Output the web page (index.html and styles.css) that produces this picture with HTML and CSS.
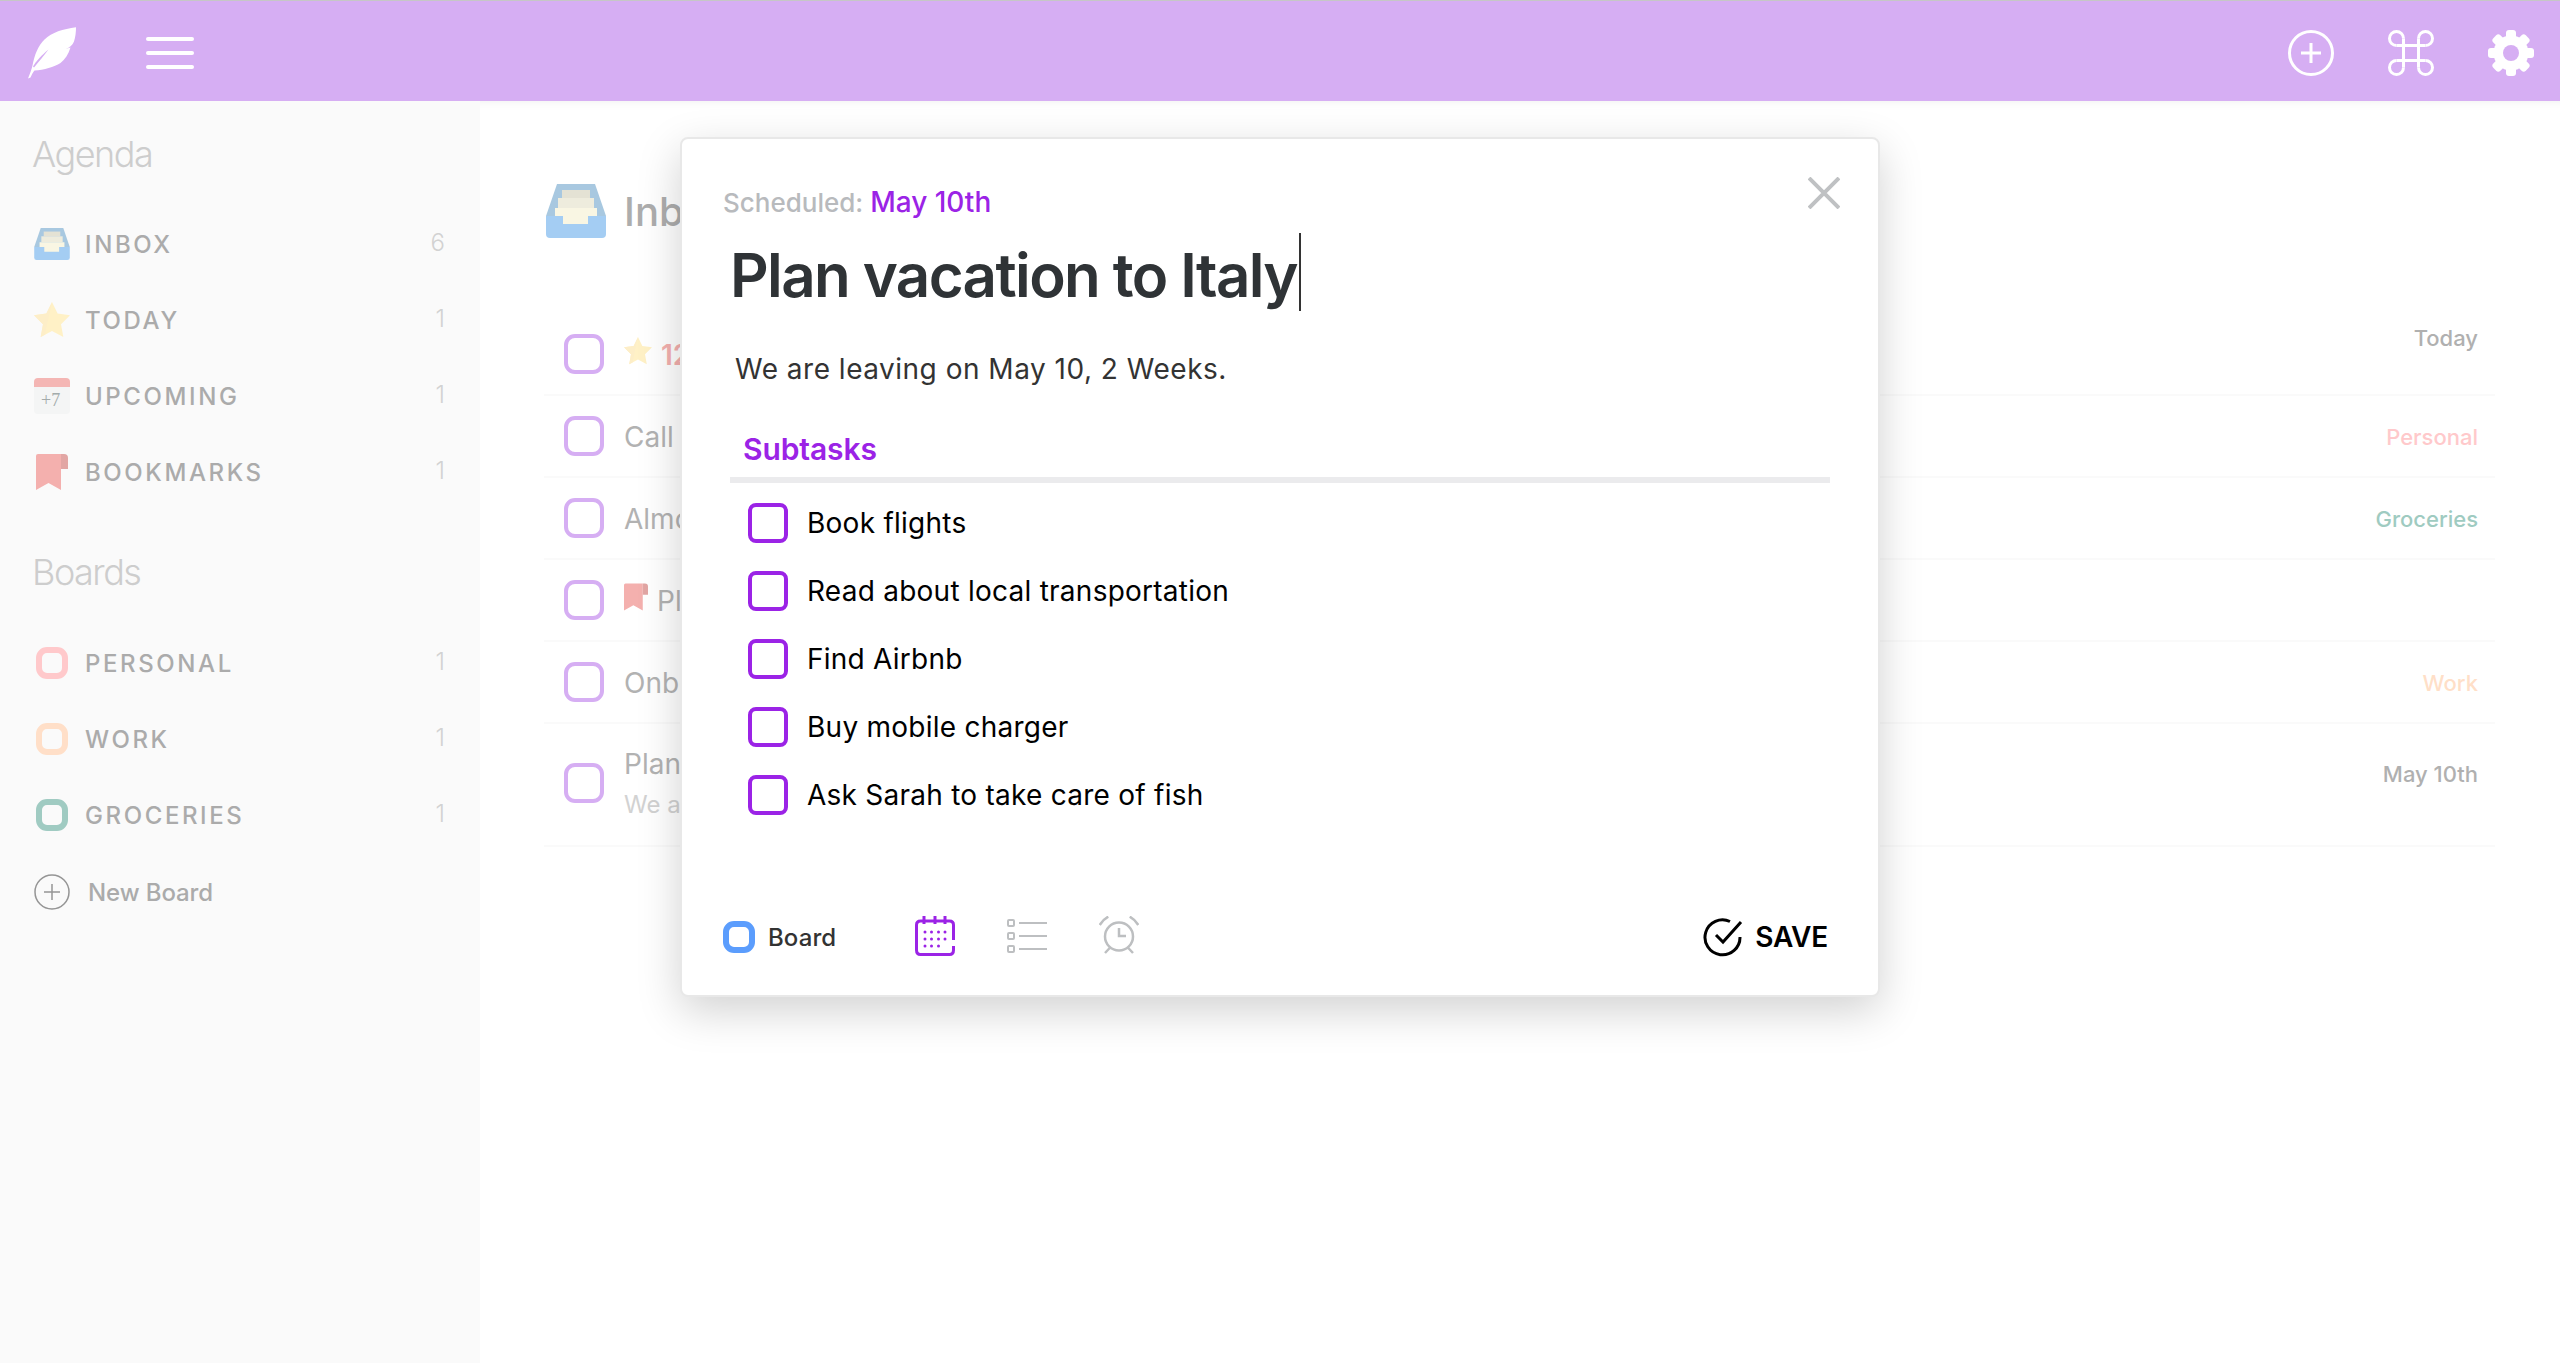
FILE: index.html
```html
<!DOCTYPE html>
<html lang="en">
<head>
    <meta charset="UTF-8">
    <title>Plan vacation to Italy</title>
    <link rel="stylesheet" href="styles.css">
</head>
<body>
    <svg class="defs" width="0" height="0">
        <symbol id="i-inbox" viewBox="0 0 60 54">
            <path d="M11 0H49L60 32H0Z" fill="#a8c8e0"/>
            <rect x="16" y="6" width="28" height="8" fill="#e4e2d4"/>
            <rect x="12" y="14" width="36" height="10" fill="#eeecdd"/>
            <path d="M0 32H60V50Q60 54 56 54H4Q0 54 0 50Z" fill="#a4cdf3"/>
            <path d="M9 24H51V32H42V40H17V32H9Z" fill="#f9f6e3"/>
        </symbol>
        <symbol id="i-star" viewBox="0 0 36 36">
            <path d="M18 0L23.6 11.6 36 13.2 27 22.3 29.3 35 18 29 6.7 35 9 22.3 0 13.2 12.4 11.6Z" fill="#fff1c6"/>
            <path d="M18 0L12.4 11.6 0 13.2 9 22.3 6.7 35 11 32.7 14 18Z" fill="#fdeec8"/>
        </symbol>
        <symbol id="i-upcoming" viewBox="0 0 36 36">
            <path d="M0 9V4Q0 0 4 0H32Q36 0 36 4V9Z" fill="#f4b6b4"/>
            <path d="M0 9H36V32Q36 36 32 36H4Q0 36 0 32Z" fill="#f4f5f5"/>
            <text x="7" y="28" class="cal-text">+7</text>
        </symbol>
        <symbol id="i-bookmark" viewBox="0 0 32 36">
            <path d="M0 2Q0 0 2 0H25V36L12.5 29 0 36Z" fill="#f4b0ae"/>
            <path d="M25 0H28Q32 0 32 4V15H25Z" fill="#e2a6a4"/>
        </symbol>
    </svg>

    <header class="topbar">
        <div class="topbar-left">
            <svg class="feather" width="50" height="54" viewBox="27 26 50 54">
                <path d="M76 27.3C63 29 52 32.500 44.500 39.500 38 46 34.500 55 32.500 65.500 31.500 70 29.500 74.500 28 78.500L30.500 77.500C31.500 75 33 72.500 34.500 70.500 44 70 54 67 60.500 63 65 59.500 68.500 54 70.500 47.500L65.500 49C70 47.500 72.500 45 74 41.500 75.500 37 76 32 76 27.3Z" fill="#fff"/>
                <path d="M33 66.500C36 61 42 55 48.500 49.500 43.500 56 39 61.500 34 67.500Z" fill="#d6aef3"/>
            </svg>
            <div class="burger"><span></span><span></span><span></span></div>
        </div>
        <div class="topbar-right">
            <svg width="46" height="46" viewBox="0 0 46 46" class="top-icon">
                <circle cx="23" cy="23" r="21.500"/>
                <path d="M23 13V33M13 23H33"/>
            </svg>
            <svg width="46" height="46" viewBox="0 0 46 46" class="top-icon">
                <path d="M15.500 8.500V37.500M30.500 8.500V37.500M8.500 15.500H37.500M8.500 30.500H37.500"/>
                <path d="M15.500 8.500A7 7 0 1 0 8.500 15.500M30.500 8.500A7 7 0 1 1 37.500 15.500M15.500 37.500A7 7 0 1 1 8.500 30.500M30.500 37.500A7 7 0 1 0 37.500 30.500"/>
            </svg>
            <svg width="46" height="46" viewBox="0 0 46 46" class="gear">
                <circle cx="23" cy="23" r="17.500" fill="#fff"/>
                <rect x="18" y="0" width="10" height="46" rx="3" fill="#fff"/>
                <rect x="18" y="0" width="10" height="46" rx="3" fill="#fff" transform="rotate(45 23 23)"/>
                <rect x="18" y="0" width="10" height="46" rx="3" fill="#fff" transform="rotate(90 23 23)"/>
                <rect x="18" y="0" width="10" height="46" rx="3" fill="#fff" transform="rotate(135 23 23)"/>
                <circle cx="23" cy="23" r="8" fill="#d6aef3"/>
            </svg>
        </div>
    </header>

    <div class="layout">
        <aside class="sidebar">
            <h2 class="side-title">Agenda</h2>
            <ul class="side-list">
                <li class="side-item">
                    <svg class="side-icon" width="36" height="32"><use href="#i-inbox"/></svg>
                    <span class="side-label">INBOX</span><span class="side-count">6</span>
                </li>
                <li class="side-item">
                    <svg class="side-icon" width="36" height="36"><use href="#i-star"/></svg>
                    <span class="side-label">TODAY</span><span class="side-count">1</span>
                </li>
                <li class="side-item">
                    <svg class="side-icon" width="36" height="36"><use href="#i-upcoming"/></svg>
                    <span class="side-label">UPCOMING</span><span class="side-count">1</span>
                </li>
                <li class="side-item">
                    <svg class="side-icon" width="32" height="36"><use href="#i-bookmark"/></svg>
                    <span class="side-label">BOOKMARKS</span><span class="side-count">1</span>
                </li>
            </ul>

            <h2 class="side-title boards-title">Boards</h2>
            <ul class="side-list boards-list">
                <li class="side-item">
                    <span class="board-dot pink"></span>
                    <span class="side-label">PERSONAL</span><span class="side-count">1</span>
                </li>
                <li class="side-item">
                    <span class="board-dot peach"></span>
                    <span class="side-label">WORK</span><span class="side-count">1</span>
                </li>
                <li class="side-item">
                    <span class="board-dot teal"></span>
                    <span class="side-label">GROCERIES</span><span class="side-count">1</span>
                </li>
            </ul>
            <div class="new-board">
                <svg width="36" height="36" viewBox="0 0 36 36" class="new-icon">
                    <circle cx="18" cy="18" r="17"/>
                    <path d="M18 10V26M10 18H26"/>
                </svg>
                <span>New Board</span>
            </div>
        </aside>

        <main class="content">
            <div class="content-head">
                <svg width="60" height="54"><use href="#i-inbox"/></svg>
                <h1>Inbox</h1>
            </div>
            <div class="task">
                <span class="box"></span>
                <svg class="task-mark" width="28" height="28"><use href="#i-star"/></svg>
                <span class="task-name red">12:30 Lunch</span>
                <span class="task-tag today-tag upper">Today</span>
            </div>
            <div class="task">
                <span class="box"></span>
                <span class="task-name">Call mom</span>
                <span class="task-tag pink-text">Personal</span>
            </div>
            <div class="task">
                <span class="box"></span>
                <span class="task-name">Almond milk</span>
                <span class="task-tag teal-text">Groceries</span>
            </div>
            <div class="task">
                <span class="box"></span>
                <svg class="task-mark" width="24" height="28"><use href="#i-bookmark"/></svg>
                <span class="task-name">Pl</span>
            </div>
            <div class="task">
                <span class="box"></span>
                <span class="task-name">Onboarding</span>
                <span class="task-tag peach-text">Work</span>
            </div>
            <div class="task tall">
                <span class="box"></span>
                <div class="task-text">
                    <span class="task-name">Plan vacation to Italy</span>
                    <span class="task-note">We are leaving on May 10, 2 Weeks.</span>
                </div>
                <span class="task-tag today-tag">May 10th</span>
            </div>
        </main>
    </div>

    <section class="modal">
        <svg class="close" width="32" height="32" viewBox="0 0 32 32">
            <path d="M1 1L31 31M31 1L1 31"/>
        </svg>
        <p class="scheduled">Scheduled: <span>May 10th</span></p>
        <div class="modal-title">Plan vacation to Italy<span class="caret"></span></div>
        <p class="modal-desc">We are leaving on May 10, 2 Weeks.</p>
        <h3 class="subtasks-head">Subtasks</h3>
        <ul class="subtasks">
            <li><span class="sub-box"></span>Book flights</li>
            <li><span class="sub-box"></span>Read about local transportation</li>
            <li><span class="sub-box"></span>Find Airbnb</li>
            <li><span class="sub-box"></span>Buy mobile charger</li>
            <li><span class="sub-box"></span>Ask Sarah to take care of fish</li>
        </ul>
        <div class="modal-foot">
            <div class="board-pick"><span class="board-dot blue"></span>Board</div>
            <div class="tools">
                <svg width="40" height="40" viewBox="0 0 40 40" class="tool cal">
                    <path d="M38.500 24V9Q38.500 5 34.500 5H5.500Q1.500 5 1.500 9V34Q1.500 38.500 5.500 38.500H34.500Q38.500 38.500 38.500 34V30"/>
                    <path d="M9 0V8M20 0V8M30 0V8"/>
                    <g class="cal-dots">
                        <circle cx="10" cy="16" r="1.500"/><circle cx="16.500" cy="16" r="1.500"/><circle cx="23.500" cy="16" r="1.500"/><circle cx="30" cy="16" r="1.500"/>
                        <circle cx="10" cy="23" r="1.500"/><circle cx="16.500" cy="23" r="1.500"/><circle cx="23.500" cy="23" r="1.500"/><circle cx="30" cy="23" r="1.500"/>
                        <circle cx="10" cy="30" r="1.500"/><circle cx="16.500" cy="30" r="1.500"/><circle cx="23.500" cy="30" r="1.500"/>
                    </g>
                </svg>
                <svg width="40" height="40" viewBox="0 0 40 40" class="tool grey-tool thin">
                    <rect x="1" y="4" width="6" height="6" rx="1"/>
                    <rect x="1" y="17" width="6" height="6" rx="1"/>
                    <rect x="1" y="30" width="6" height="6" rx="1"/>
                    <path d="M12 7H40M12 20H40M12 33H40"/>
                </svg>
                <svg width="40" height="40" viewBox="0 0 40 40" class="tool grey-tool alarm">
                    <circle cx="20" cy="20.500" r="14"/>
                    <path d="M20 12V20H27"/>
                    <path d="M0.700 9Q4 3.500 9.300 0.700M39.300 9Q36 3.500 30.700 0.700M10.700 32L6 37M29.300 32L34 37"/>
                </svg>
            </div>
            <div class="save">
                <svg width="40" height="40" viewBox="0 0 40 40" class="save-icon">
                    <path d="M37 20A17.500 17.500 0 1 1 27 4.500"/>
                    <path d="M13 18L20 25 38 5"/>
                </svg>
                SAVE
            </div>
        </div>
    </section>
</body>
</html>
```

FILE: styles.css
```css
* {
    box-sizing: border-box;
}
html, body {
    height: 100%;
}
body {
    margin: 0;
    overflow: hidden;
    background-color: #fff;
    font-family: Inter, "Noto Sans", sans-serif;
}
ul {
    list-style: none;
    margin: 0;
    padding: 0;
}
.defs {
    position: absolute;
}
.cal-text {
    font-family: "Liberation Serif", serif;
    font-size: 18px;
    fill: #a3abab;
}

/* top bar */
.topbar {
    height: 101px;
    display: flex;
    align-items: center;
    justify-content: space-between;
    background-color: #d6aef3;
    border-top: 1px solid #c6c6c6;
    padding: 3px 26px 0 27px;
}
.topbar-left {
    display: flex;
    align-items: center;
}
.feather {
    margin-right: 69px;
}
.burger {
    width: 48px;
    display: flex;
    flex-direction: column;
    gap: 10px;
}
.burger span {
    height: 4px;
    border-radius: 2px;
    background-color: #fff;
}
.topbar-right {
    display: flex;
    align-items: center;
    gap: 54px;
}
.top-icon {
    fill: none;
    stroke: #fff;
    stroke-width: 3;
}

.layout {
    display: flex;
    height: calc(100% - 101px);
}

/* sidebar */
.sidebar {
    width: 480px;
    flex-shrink: 0;
    background-color: #fafafa;
    padding: 31px 35px 0 32px;
}
.side-title {
    margin: 0;
    font-size: 36px;
    line-height: 44px;
    font-weight: 300;
    letter-spacing: -1.5px;
    color: #cdcdcd;
}
.boards-title {
    margin-top: 40px;
}
.side-list {
    margin-top: 30px;
}
.boards-list {
    margin-top: 31px;
}
.side-item {
    height: 76px;
    display: flex;
    align-items: center;
}
.side-icon {
    width: 36px;
    flex-shrink: 0;
    margin-left: 2px;
}
.side-label {
    margin-left: 15px;
    font-size: 24px;
    font-weight: 500;
    letter-spacing: 2.6px;
    color: #ababab;
}
.side-count {
    margin-left: auto;
    margin-bottom: 4px;
    font-size: 24px;
    font-weight: 300;
    color: #d2d2d2;
}
.board-dot {
    width: 32px;
    height: 32px;
    flex-shrink: 0;
    border: 6px solid;
    border-radius: 11px;
    margin-left: 4px;
    margin-right: 2px;
}
.pink {
    border-color: #ffc9cb;
}
.peach {
    border-color: #ffdfc8;
}
.teal {
    border-color: #a0cbc2;
}
.blue {
    border-color: #5b9dfd;
    margin: 0 13px 0 0;
}
.new-board {
    margin-top: 17px;
    height: 44px;
    display: flex;
    align-items: center;
    font-size: 24px;
    font-weight: 500;
    letter-spacing: -0.1px;
    color: #ababab;
}
.new-board span {
    margin-left: 18px;
}
.new-icon {
    margin-left: 2px;
    fill: none;
    stroke: #959595;
    stroke-width: 1.5;
}

/* task list behind the dialog */
.content {
    flex: 1;
    padding: 83px 65px 0 66px;
    box-shadow: inset 0 12px 10px -10px rgba(0, 0, 0, 0.05);
}
.content-head {
    height: 130px;
    display: flex;
    align-items: flex-start;
    gap: 18px;
}
.content-head h1 {
    margin: 0;
    font-size: 40px;
    line-height: 56px;
    font-weight: 500;
    color: #adadad;
}
.task {
    height: 82px;
    display: flex;
    align-items: center;
    margin-left: -2px;
    padding: 0 17px 0 20px;
    border-bottom: 2px solid #fafafa;
}
.task.tall {
    height: 123px;
    padding-bottom: 3px;
}
.box {
    width: 40px;
    height: 40px;
    flex-shrink: 0;
    border: 4px solid #d6aef3;
    border-radius: 11px;
    margin-right: 20px;
}
.task-mark {
    margin-right: 9px;
    margin-bottom: 6px;
}
.task-name {
    padding-top: 2px;
    font-size: 28px;
    color: #b2b2b2;
}
.task-name.red {
    font-weight: 600;
    color: #f4b0ae;
}
.task-text {
    display: flex;
    flex-direction: column;
    gap: 9px;
    margin-bottom: 2px;
}
.task-note {
    font-size: 24px;
    color: #d2d2d2;
}
.task-tag {
    margin-left: auto;
    padding-top: 2px;
    font-size: 22px;
    font-weight: 500;
}
.tall .task-tag {
    padding: 0 0 18px;
}
.task-tag.upper {
    padding: 0 0 32px;
}
.today-tag {
    color: #b0b0b0;
}
.pink-text {
    color: #ffc9cb;
}
.teal-text {
    color: #9fcbc1;
}
.peach-text {
    color: #ffdfc8;
}

/* dialog */
.modal {
    position: absolute;
    left: 680px;
    top: 137px;
    width: 1200px;
    height: 860px;
    display: flex;
    flex-direction: column;
    background-color: #fff;
    border: 2px solid #e8e8e8;
    border-radius: 8px;
    padding: 47px 50px 38px 41px;
    box-shadow: 0 14px 44px rgba(0, 0, 0, 0.18);
}
.close {
    position: absolute;
    right: 38px;
    top: 38px;
    fill: none;
    stroke: #bfc1c3;
    stroke-width: 4;
}
.scheduled {
    margin: 0;
    font-size: 26px;
    line-height: 32px;
    font-weight: 500;
    color: #b8babd;
}
.scheduled span {
    font-size: 28px;
    color: #9b23e6;
}
.modal-title {
    display: flex;
    height: 78px;
    margin: 14px 0 0 7px;
    font-size: 60px;
    line-height: 84px;
    font-weight: 600;
    letter-spacing: -1.6px;
    color: #2f3336;
}
.caret {
    width: 2px;
    height: 78px;
    margin-left: 2px;
    background-color: #333;
}
.modal-desc {
    margin: 40px 0 0 12px;
    font-size: 28px;
    line-height: 36px;
    letter-spacing: 0.5px;
    color: #333;
}
.subtasks-head {
    margin: 44px -2px 0 7px;
    padding: 0 0 10px 13px;
    border-bottom: 6px solid #ebebed;
    font-size: 30px;
    line-height: 36px;
    font-weight: 600;
    letter-spacing: -0.1px;
    color: #9b23e6;
}
.subtasks {
    margin-top: 6px;
    margin-left: 25px;
}
.subtasks li {
    height: 68px;
    display: flex;
    align-items: center;
    font-size: 28px;
    letter-spacing: 0.25px;
    color: #000;
}
.sub-box {
    width: 40px;
    height: 40px;
    border: 4px solid #9b23e6;
    border-radius: 8px;
    margin-right: 19px;
}
.modal-foot {
    margin-top: auto;
    height: 40px;
    display: flex;
    align-items: center;
}
.board-pick {
    width: 192px;
    display: flex;
    align-items: center;
    font-size: 24px;
    font-weight: 500;
    letter-spacing: 0.1px;
    color: #333;
}
.tools {
    display: flex;
    gap: 52px;
    margin-bottom: 2px;
}
.tool {
    fill: none;
    stroke-width: 3;
}
.cal {
    stroke: #9b23e6;
}
.cal-dots {
    fill: #9b23e6;
    stroke: none;
}
.grey-tool {
    stroke: #bdbfc1;
}
.thin {
    stroke-width: 2;
}
.alarm {
    stroke-width: 2.5;
}
.save {
    margin-left: auto;
    display: flex;
    align-items: center;
    gap: 12px;
    font-size: 28px;
    font-weight: 600;
    letter-spacing: -0.2px;
    color: #000;
}
.save-icon {
    fill: none;
    stroke: #000;
    stroke-width: 3;
}
```
